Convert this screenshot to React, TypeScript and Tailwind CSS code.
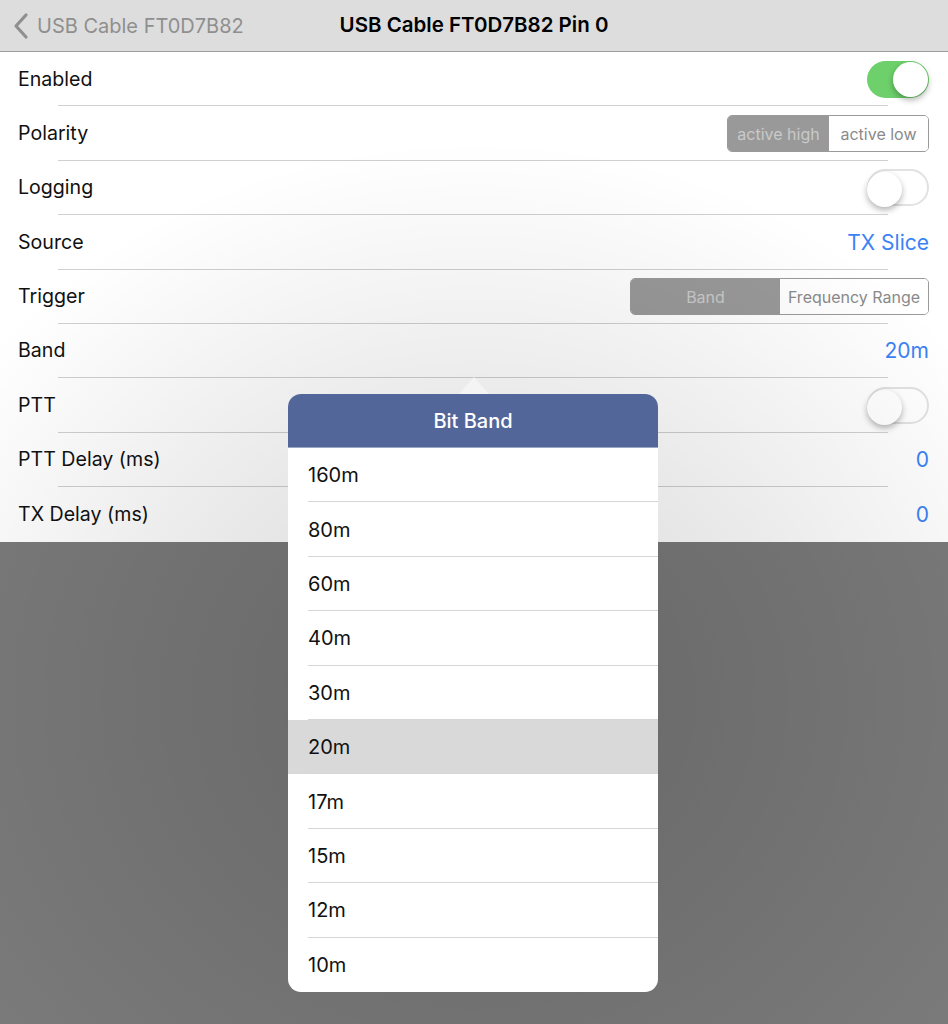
import React from "react";

const font = { fontFamily: "Inter, 'Noto Sans', 'Liberation Sans', sans-serif" };

const Toggle = ({ on }: { on: boolean }) => (
  <div
    className={`relative w-[62px] h-[37px] rounded-full ${
      on ? "bg-[#6dd06a]" : "bg-transparent border-2 border-[#e2e2e2]"
    }`}
  >
    <div
      className={`absolute top-[1px] w-[35px] h-[35px] rounded-full bg-white shadow-[0_3px_6px_rgba(0,0,0,0.3)] ${
        on ? "right-[1px]" : "left-[-2px] top-[-1px]"
      }`}
    />
  </div>
);

const Segmented = ({ items, widths }: { items: string[]; widths: string[] }) => (
  <div className="flex h-[37px] rounded-[5px] border border-[#9a9a9a] overflow-hidden text-[16px]">
    {items.map((t, i) => (
      <div
        key={t}
        className={`${widths[i]} flex items-center justify-center ${
          i === 0 ? "bg-[#999999] text-[#c9c9c9]" : "bg-white text-[#8a8a8a]"
        }`}
      >
        {t}
      </div>
    ))}
  </div>
);

const Row = ({ label, children, last }: { label: string; children?: React.ReactNode; last?: boolean }) => (
  <div className="relative h-[54.4px] flex items-center justify-between pl-[18px] pr-[19px]">
    <span className="text-[19.6px] text-[#111]">{label}</span>
    {children}
    {!last && <div className="absolute bottom-0 left-[58px] right-[60px] h-px bg-[#d0d0d0]" />}
  </div>
);

const Blue = ({ children }: { children: React.ReactNode }) => (
  <span className="text-[21px] text-[#3b82f6]">{children}</span>
);

const bands = ["160m", "80m", "60m", "40m", "30m", "20m", "17m", "15m", "12m", "10m"];

export default function App() {
  return (
    <div className="relative w-[948px] h-[1024px] overflow-hidden bg-[#7b7b7b]" style={font}>
      {/* nav bar */}
      <div className="relative h-[52px] bg-[#dddddd] border-b border-[#9d9d9d] flex items-center">
        <div className="flex items-center pl-[11px] text-[#8f8f8f]">
          <svg width="20" height="28" viewBox="0 0 20 28">
            <path d="M15 3 L5 14 L15 25" fill="none" stroke="#8f8f8f" strokeWidth="3.2" strokeLinecap="round" strokeLinejoin="round" />
          </svg>
          <span className="ml-[6px] text-[20px]">USB Cable FT0D7B82</span>
        </div>
        <div className="absolute left-0 right-0 text-center text-[20.5px] font-semibold text-black pointer-events-none">
          USB Cable FT0D7B82 Pin 0
        </div>
      </div>

      {/* settings table */}
      <div className="bg-white">
        <Row label="Enabled">
          <Toggle on />
        </Row>
        <Row label="Polarity">
          <Segmented items={["active high", "active low"]} widths={["w-[101px]", "w-[99px]"]} />
        </Row>
        <Row label="Logging">
          <Toggle on={false} />
        </Row>
        <Row label="Source">
          <Blue>TX Slice</Blue>
        </Row>
        <Row label="Trigger">
          <Segmented items={["Band", "Frequency Range"]} widths={["w-[149px]", "w-[148px]"]} />
        </Row>
        <Row label="Band">
          <Blue>20m</Blue>
        </Row>
        <Row label="PTT">
          <Toggle on={false} />
        </Row>
        <Row label="PTT Delay (ms)">
          <Blue>0</Blue>
        </Row>
        <Row label="TX Delay (ms)" last>
          <Blue>0</Blue>
        </Row>
      </div>

      {/* popover shadow */}
      <div className="absolute inset-0 pointer-events-none bg-[radial-gradient(ellipse_620px_560px_at_474px_700px,rgba(0,0,0,0.17),rgba(0,0,0,0.08)_55%,rgba(0,0,0,0)_100%)]" />

      {/* popover */}
      <div className="absolute left-[288px] top-[394px] w-[370px]">
        <div className="absolute left-[171px] top-[-17px] w-0 h-0 border-l-[15px] border-r-[15px] border-b-[17px] border-l-transparent border-r-transparent border-b-[#f4f4f4]" />
        <div className="rounded-[13px] overflow-hidden bg-white">
          <div className="h-[54px] bg-[#536699] flex items-center justify-center text-white text-[20px] font-medium border-b border-[#9aa6c6]">
            Bit Band
          </div>
          {bands.map((b, i) => (
            <div
              key={b}
              className={`relative h-[54.4px] flex items-center pl-[20px] text-[20px] text-[#111] ${
                b === "20m" ? "bg-[#d9d9d9]" : ""
              }`}
            >
              {b}
              {i < bands.length - 1 && <div className="absolute bottom-0 left-[20px] right-0 h-px bg-[#d6d6d6]" />}
            </div>
          ))}
        </div>
      </div>
    </div>
  );
}
